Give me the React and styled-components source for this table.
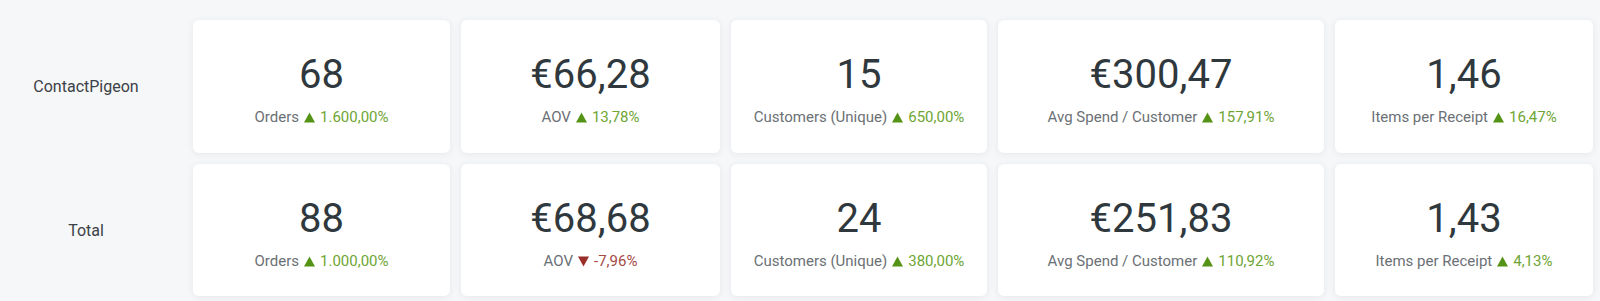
import React from 'react'
import styled, { createGlobalStyle } from 'styled-components'

const rows = [
  {
    name: 'ContactPigeon',
    stats: [
      { value: '68', label: 'Orders', change: '1.600,00%', up: true },
      { value: '€66,28', label: 'AOV', change: '13,78%', up: true },
      { value: '15', label: 'Customers (Unique)', change: '650,00%', up: true },
      { value: '€300,47', label: 'Avg Spend / Customer', change: '157,91%', up: true },
      { value: '1,46', label: 'Items per Receipt', change: '16,47%', up: true },
    ],
  },
  {
    name: 'Total',
    stats: [
      { value: '88', label: 'Orders', change: '1.000,00%', up: true },
      { value: '€68,68', label: 'AOV', change: '-7,96%', up: false },
      { value: '24', label: 'Customers (Unique)', change: '380,00%', up: true },
      { value: '€251,83', label: 'Avg Spend / Customer', change: '110,92%', up: true },
      { value: '1,43', label: 'Items per Receipt', change: '4,13%', up: true },
    ],
  },
]

const GlobalStyle = createGlobalStyle`
  html, body {
    margin: 0;
    padding: 0;
    background: #f6f7f9;
    font-family: Roboto, 'Liberation Sans', sans-serif;
  }
`

const Board = styled.div`
  display: grid;
  grid-template-columns: 182px 257px 259px 256px 326px 258px;
  grid-template-rows: 133px 132px;
  column-gap: 11px;
  row-gap: 11px;
  padding: 20px 0 5px 0;
  width: 1600px;
  box-sizing: border-box;
`

const RowName = styled.div`
  display: flex;
  align-items: center;
  justify-content: center;
  padding-right: 10px;
  font-size: 16px;
  color: #3b4146;
`

const Card = styled.div`
  background: #fff;
  border-radius: 6px;
  box-shadow: 0 1px 7px rgba(30, 40, 60, 0.08);
  display: flex;
  flex-direction: column;
  align-items: center;
  padding-top: 31px;
  box-sizing: border-box;
`

const Value = styled.div`
  font-size: 40px;
  line-height: 48px;
  color: #2f383d;
`

const Caption = styled.div`
  margin-top: 8px;
  font-size: 15px;
  line-height: 20px;
  color: #6b7075;
  display: flex;
  align-items: center;
  gap: 5px;
  white-space: nowrap;
`

const Change = styled.span`
  display: inline-flex;
  align-items: center;
  gap: 5px;
  color: ${p => (p.$up ? '#6ea534' : '#a54a45')};
  svg {
    fill: ${p => (p.$up ? '#559316' : '#9a2f2a')};
  }
`

const Arrow = ({ up }) => (
  <svg width="11" height="11" viewBox="0 0 10 10">
    {up ? <polygon points="5,0.5 10,9.5 0,9.5" /> : <polygon points="0,0.5 10,0.5 5,9.5" />}
  </svg>
)

export default function App() {
  return (
    <>
      <GlobalStyle />
      <Board>
        {rows.map(row => (
          <React.Fragment key={row.name}>
            <RowName>{row.name}</RowName>
            {row.stats.map(s => (
              <Card key={s.label}>
                <Value>{s.value}</Value>
                <Caption>
                  {s.label}
                  <Change $up={s.up}>
                    <Arrow up={s.up} />
                    {s.change}
                  </Change>
                </Caption>
              </Card>
            ))}
          </React.Fragment>
        ))}
      </Board>
    </>
  )
}
